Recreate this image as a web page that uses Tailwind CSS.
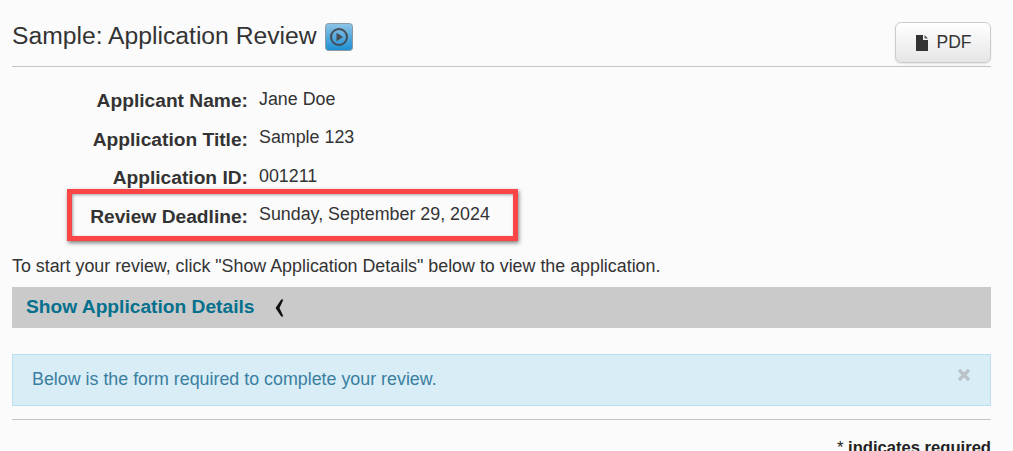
<!DOCTYPE html>
<html lang="en">
<head>
  <meta charset="UTF-8" />
  <title>Sample: Application Review</title>
  <script src="https://cdn.jsdelivr.net/npm/@tailwindcss/browser@4"></script>
</head>
<body class="bg-[#fbfbfb] font-['Liberation_Sans',Arial,sans-serif] text-[#333333] overflow-hidden h-[451px]">
  <div class="pl-3 pr-[22px]">
    <!-- header -->
    <div class="flex justify-between h-[67px] border-b border-[#c4c4c4]">
      <h1 class="flex items-center h-[28px] mt-[22px] text-[24.7px] font-normal leading-[28px]">
        Sample: Application Review
        <svg class="ml-2 mt-[2px]" width="28" height="28" viewBox="0 0 28 28">
          <defs>
            <linearGradient id="playBg" x1="0" y1="0" x2="0" y2="1">
              <stop offset="0" stop-color="#8fc4e6" />
              <stop offset="1" stop-color="#1c8fd3" />
            </linearGradient>
          </defs>
          <rect x="0.5" y="0.5" width="27" height="27" rx="3" fill="url(#playBg)" stroke="#8e9aa3" />
          <circle cx="14" cy="14" r="8" fill="none" stroke="#444c55" stroke-width="2" />
          <path d="M11.5 9.8 L18 14 L11.5 18.2 Z" fill="#444c55" />
        </svg>
      </h1>
      <button class="flex items-center justify-center w-[96px] h-[41px] mt-[22px] rounded-[6px] border border-[#cccccc] bg-gradient-to-b from-white to-[#e6e6e6] shadow-[0_1px_2px_rgba(0,0,0,0.1)] text-[17.5px]">
        <svg class="mr-[8px]" width="14" height="18" viewBox="0 0 14 18">
          <path d="M1 1 H8 V6 H13 V17 H1 Z" fill="#333333" />
          <path d="M9.5 1 L13 4.5 H9.5 Z" fill="#555555" />
        </svg>
        PDF
      </button>
    </div>

    <!-- applicant info -->
    <dl class="relative grid grid-cols-[236px_1fr] gap-x-[11px] mt-[20px] text-[17.85px]">
      <dt class="text-right font-bold text-[19.2px] h-[39px] leading-[28px]">Applicant Name:</dt>
      <dd class="leading-[25px]">Jane Doe</dd>
      <dt class="text-right font-bold text-[19.2px] h-[38px] leading-[28px]">Application Title:</dt>
      <dd class="leading-[23px]">Sample 123</dd>
      <dt class="text-right font-bold text-[19.2px] h-[39px] leading-[28px]">Application ID:</dt>
      <dd class="leading-[24px]">001211</dd>
      <dt class="text-right font-bold text-[19.2px] h-[38px] leading-[28px]">Review Deadline:</dt>
      <dd class="leading-[23px]">Sunday, September 29, 2024</dd>
      <div class="absolute left-[55px] top-[102px] w-[451px] h-[52px] border-[5px] border-[#f94545] shadow-[1px_2px_4px_rgba(0,0,0,0.5),inset_1px_1px_3px_rgba(0,0,0,0.35)]"></div>
    </dl>

    <p class="mt-[14px] text-[17.85px] leading-[22px]">To start your review, click "Show Application Details" below to view the application.</p>

    <!-- details toggle -->
    <div class="flex items-center h-[41px] mt-[10px] pl-[14px] bg-[#cacaca]">
      <span class="font-bold text-[19.2px] text-[#04708d]">Show Application Details</span>
      <svg class="ml-[20px]" width="9" height="18" viewBox="0 0 8 16">
        <path d="M5.5 0.5 L0.5 8 L5.5 15.5 L7.5 15.5 L4 8 L7.5 0.5 Z" fill="#111111" />
      </svg>
    </div>

    <!-- notice -->
    <div class="flex justify-between h-[52px] mt-[26px] pl-[19px] pr-[19px] bg-[#d9edf7] border border-[#bce0f0] text-[#3a7fa0]">
      <span class="text-[17.85px] leading-[48px]">Below is the form required to complete your review.</span>
      <svg class="mt-[13px] mr-0" width="14" height="14" viewBox="0 0 14 14">
        <path d="M2 2 L12 12 M12 2 L2 12" stroke="#b9c3c9" stroke-width="3.4" />
      </svg>
    </div>

    <div class="mt-[13px] border-t border-[#c4c4c4]"></div>

    <p class="mt-[18px] text-right text-[16.6px] text-[#222222] font-bold leading-[20px]"><span class="font-normal">*</span> indicates required</p>
  </div>
</body>
</html>
